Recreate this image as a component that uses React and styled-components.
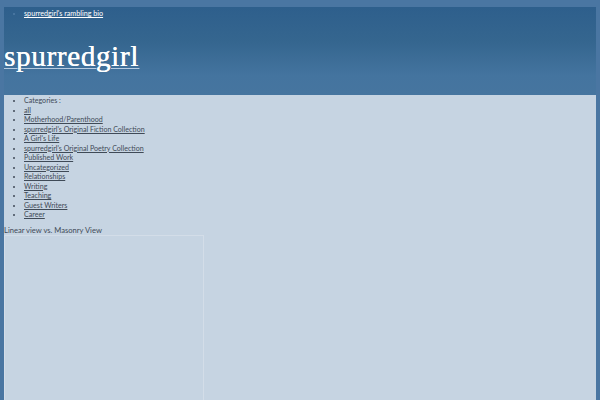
import React from 'react';
import styled, { createGlobalStyle } from 'styled-components';

const GlobalStyle = createGlobalStyle`
  html, body {
    margin: 0;
    padding: 0;
    background-color: #4a76a2;
    font-family: "Lato", "Open Sans", sans-serif;
  }
`;

const Page = styled.div`
  padding: 7px 4px 0 4px;
  min-height: 100vh;
  box-sizing: border-box;
  display: flex;
  flex-direction: column;
`;

const Header = styled.header`
  height: 88px;
  box-sizing: border-box;
  background: linear-gradient(180deg, #2e5f8c 0%, #35668f 40%, #44749f 78%, #46759f 100%);
`;

const TopNav = styled.ul`
  margin: 0;
  padding: 2px 0 0 20px;
  list-style: disc;
  color: #4f7ba6;
  font-size: 7px;
  line-height: 8px;
  li a {
    color: #ffffff;
    font-size: 7.2px;
    text-decoration: underline;
  }
`;

const Title = styled.h1`
  margin: 23px 0 0 0;
  font-family: "Liberation Serif", "DejaVu Serif", serif;
  font-weight: normal;
  font-size: 29px;
  line-height: 30px;
  a {
    color: #ffffff;
    text-decoration: underline;
    text-decoration-color: #b7cbe0;
    text-decoration-thickness: 1px;
    text-underline-offset: 2px;
    letter-spacing: 0.7px;
    text-shadow: 0.3px 0 0 #ffffff;
  }
`;

const Content = styled.main`
  flex: 1;
  background-color: #c6d4e2;
  padding: 1px 0 0 0;
  color: #3f4a57;
`;

const Categories = styled.ul`
  margin: 0;
  padding: 0 0 0 20px;
  list-style: disc;
  font-size: 7.1px;
  line-height: 9.5px;
  color: #3f4a57;
  li a {
    color: #3f4a57;
    text-decoration: underline;
  }
`;

const ViewToggle = styled.div`
  margin-top: 5px;
  font-size: 7.6px;
  line-height: 10px;
  color: #3f4a57;
`;

const Masonry = styled.div`
  width: 200px;
  height: 170px;
  box-sizing: border-box;
  border: 1px solid #d3dde8;
  border-bottom: none;
`;

const cats = [
  'all',
  'Motherhood/Parenthood',
  "spurredgirl's Original Fiction Collection",
  "A Girl's Life",
  "spurredgirl's Original Poetry Collection",
  'Published Work',
  'Uncategorized',
  'Relationships',
  'Writing',
  'Teaching',
  'Guest Writers',
  'Career',
];

export default function App() {
  return (
    <>
      <GlobalStyle />
      <Page>
        <Header>
          <TopNav>
            <li><a href="#">spurredgirl's rambling bio</a></li>
          </TopNav>
          <Title><a href="#">spurredgirl</a></Title>
        </Header>
        <Content>
          <Categories>
            <li>Categories :</li>
            {cats.map(c => (
              <li key={c}><a href="#">{c}</a></li>
            ))}
          </Categories>
          <ViewToggle>Linear view vs. Masonry View</ViewToggle>
          <Masonry />
        </Content>
      </Page>
    </>
  );
}
